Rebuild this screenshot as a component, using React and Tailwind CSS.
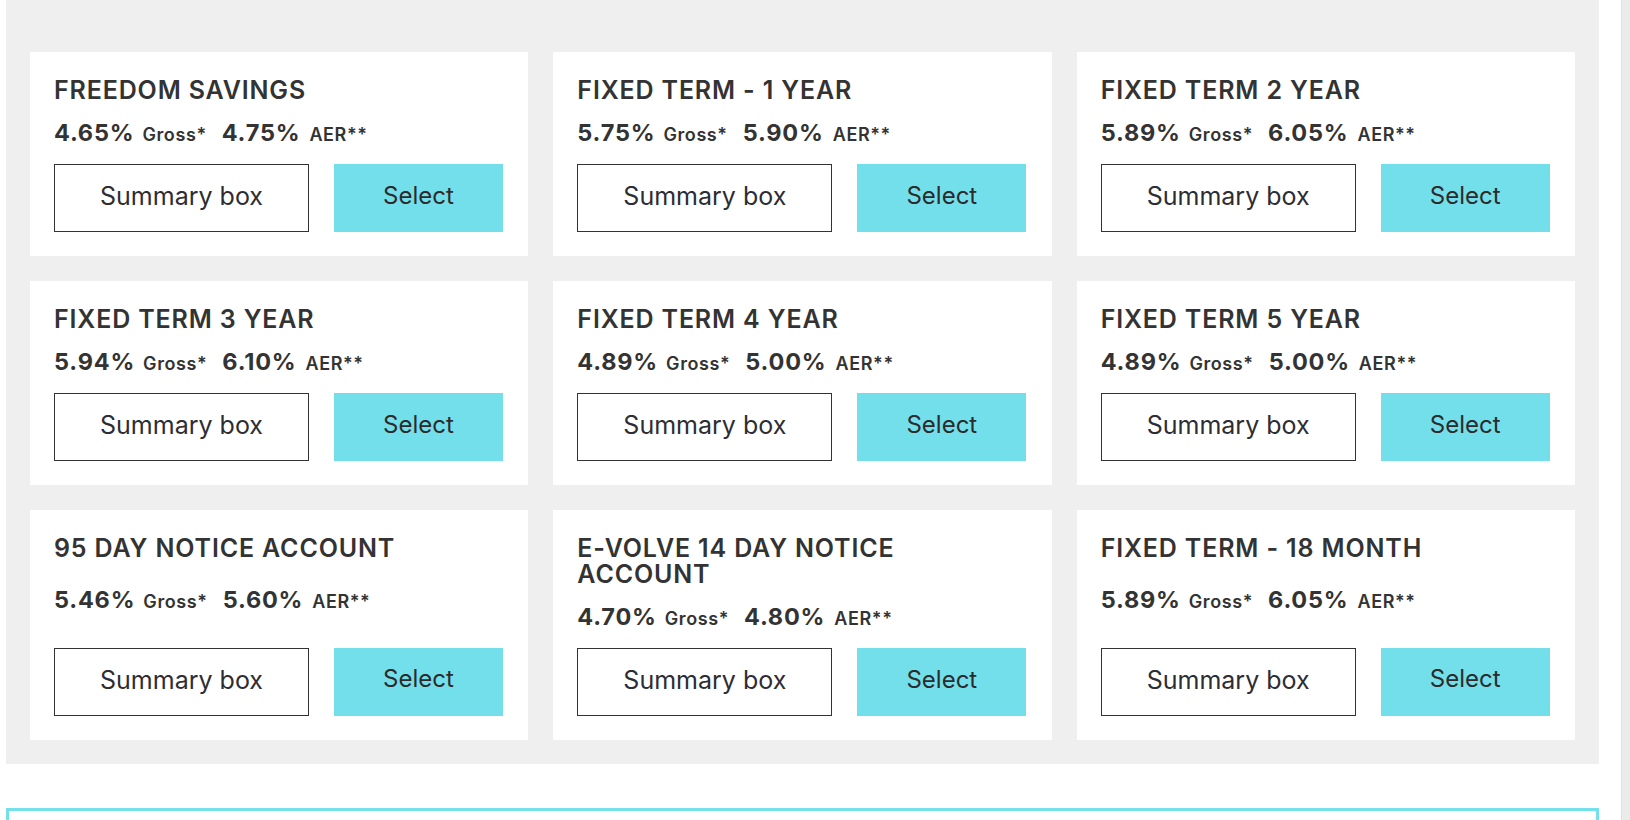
import React from "react";

const ACCOUNTS = [
  { name: "FREEDOM SAVINGS", gross: "4.65%", aer: "4.75%" },
  { name: "FIXED TERM - 1 YEAR", gross: "5.75%", aer: "5.90%" },
  { name: "FIXED TERM 2 YEAR", gross: "5.89%", aer: "6.05%" },
  { name: "FIXED TERM 3 YEAR", gross: "5.94%", aer: "6.10%" },
  { name: "FIXED TERM 4 YEAR", gross: "4.89%", aer: "5.00%" },
  { name: "FIXED TERM 5 YEAR", gross: "4.89%", aer: "5.00%" },
  { name: "95 DAY NOTICE ACCOUNT", gross: "5.46%", aer: "5.60%" },
  { name: "E-VOLVE 14 DAY NOTICE ACCOUNT", gross: "4.70%", aer: "4.80%" },
  { name: "FIXED TERM - 18 MONTH", gross: "5.89%", aer: "6.05%" },
];

const AccountCard = ({ account }) => (
  <div className="flex flex-col justify-between bg-white px-6 pt-[25px] pb-6">
    <h3 className="max-w-[400px] text-[25px] leading-[26px] font-semibold tracking-[0.85px] text-[#333]">
      {account.name}
    </h3>

    {/* Rates */}
    <div className="mt-[16px] flex items-baseline text-[#333] leading-[28px]">
      <span className="text-[23.5px] font-bold tracking-[0.8px]">{account.gross}</span>
      <span className="ml-[8px] text-[18px] font-semibold tracking-[0.6px]">Gross*</span>
      <span className="ml-[15px] text-[23.5px] font-bold tracking-[0.8px]">{account.aer}</span>
      <span className="ml-[9px] text-[18px] font-semibold tracking-[0.6px]">AER**</span>
    </div>

    <div />

    <div className="mt-[15px] flex gap-[25px]">
      <button className="flex h-[68px] w-[255px] items-center justify-center border-[1.5px] border-[#333] bg-white pb-[3px] text-[25px] text-[#2d2d33]">
        Summary box
      </button>
      <button className="flex h-[68px] w-[169px] items-center justify-center bg-[#73dfeb] pb-[5px] text-[24px] text-[#2b2b2b]">
        Select
      </button>
    </div>
  </div>
);

export default function App() {
  return (
    <div className="flex h-[820px] overflow-hidden bg-white font-['Inter',sans-serif]">
      <main className="w-[1621px] shrink-0 pl-[6px] pr-[22px]">
        <section className="bg-[#efefef] px-6 pt-[52px] pb-6">
          <div className="grid grid-cols-3 gap-[25px]">
            {ACCOUNTS.map((account) => (
              <AccountCard key={account.name} account={account} />
            ))}
          </div>
        </section>

        {/* Next panel, cut off by the viewport */}
        <div className="mt-[44px] h-[120px] border-[3px] border-[#74e0ec] bg-white" />
      </main>

      {/* Scrollbar track */}
      <div className="w-[9px] shrink-0 border-l border-[#e0e0e0] bg-[#ebebeb]" />
    </div>
  );
}
